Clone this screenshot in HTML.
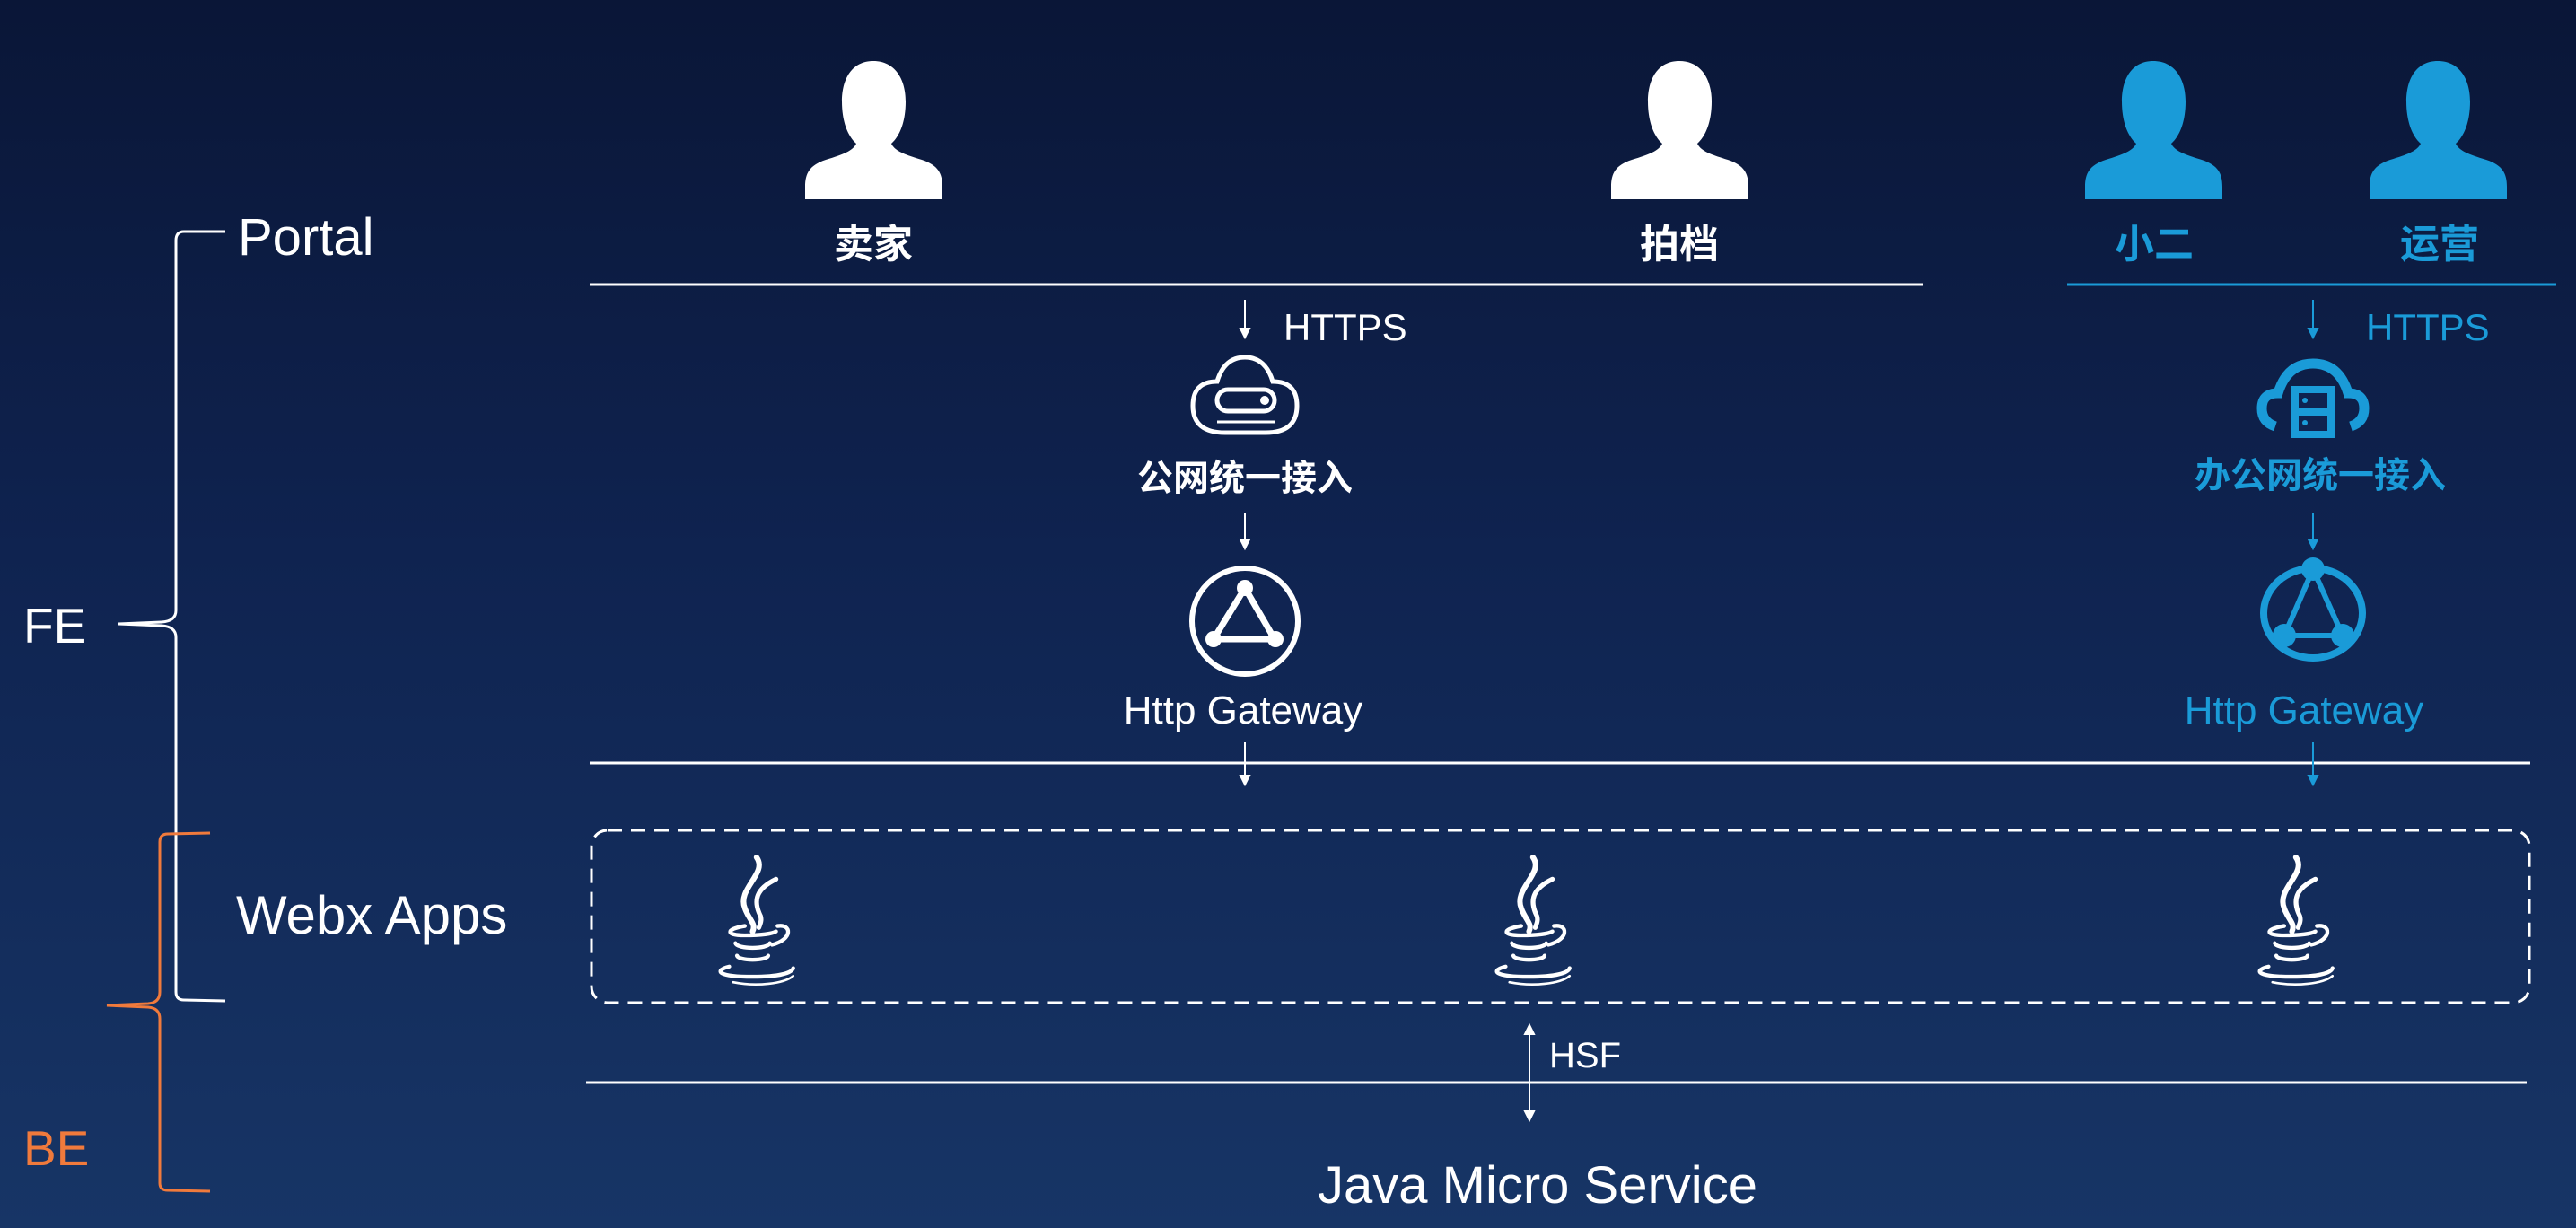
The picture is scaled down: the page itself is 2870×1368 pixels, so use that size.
<!DOCTYPE html>
<html><head><meta charset="utf-8">
<style>
html,body{margin:0;padding:0}
body{width:2870px;height:1368px;overflow:hidden;position:relative;background:linear-gradient(180deg,#0a1637 0%,#0f2350 45%,#173566 100%);font-family:"Liberation Sans","Noto Sans CJK SC",sans-serif;color:#fff}
.t{position:absolute;white-space:nowrap;line-height:1}
.c{transform:translateX(-50%)}
.b{color:#1a9bd8}
.cj{font-weight:bold}
svg{position:absolute;left:0;top:0}
</style></head><body>
<svg width="2870" height="1368" viewBox="0 0 2870 1368">
<defs>
<path id="person" d="M76,0 C100,0 112,20 112,45 C112,70 104,85 96,92 C100,100 110,104 130,110 C148,116 153,125 153,140 L153,154 L0,154 L0,140 C0,125 5,116 23,110 C43,104 53,100 57,92 C49,85 41,70 41,45 C41,20 52,0 76,0Z"/>
<g id="java" fill="none" stroke="#fff" stroke-linecap="round">
<path d="M55,0 C70,20 30,40 40,65 C45,80 55,85 50,95" stroke-width="7"/>
<path d="M80,28 C55,40 50,55 60,75 C62,80 60,85 58,90" stroke-width="6"/>
<path d="M40,88 C15,92 15,100 40,100 C60,100 75,98 80,95" stroke-width="5"/>
<path d="M82,88 C100,85 102,105 75,112" stroke-width="5"/>
<path d="M28,110 C30,118 70,118 72,110" stroke-width="5"/>
<path d="M30,126 C32,133 68,133 70,126" stroke-width="5"/>
<path d="M20,140 C0,145 5,153 50,153 C85,153 100,148 102,142" stroke-width="5"/>
<path d="M25,160 C55,166 90,162 102,152" stroke-width="3"/>
</g>
</defs>
<path d="M251,258 L205,258 Q196,258 196,268 L196,680 Q196,692 180,693 L132,695 L180,697 Q196,698 196,710 L196,1105 Q196,1114 205,1114 L251,1115" fill="none" stroke="#fff" stroke-width="3"/>
<path d="M234,928 L187,929 Q178,929 178,938 L178,1105 Q178,1117 165,1118 L119,1120 L165,1122 Q178,1123 178,1135 L178,1318 Q178,1326 187,1326 L234,1327" fill="none" stroke="#f07a3c" stroke-width="3"/>
<use href="#person" x="897" y="68" fill="#fff"/>
<use href="#person" x="1795" y="68" fill="#fff"/>
<use href="#person" x="2323" y="68" fill="#1a9bd8"/>
<use href="#person" x="2640" y="68" fill="#1a9bd8"/>
<line x1="657" y1="317" x2="2143" y2="317" stroke="#fff" stroke-width="3"/>
<line x1="2303" y1="317" x2="2848" y2="317" stroke="#1a9bd8" stroke-width="3"/>
<line x1="657" y1="850" x2="2819" y2="850" stroke="#fff" stroke-width="3"/>
<line x1="653" y1="1206" x2="2815" y2="1206" stroke="#fff" stroke-width="3"/>
<g stroke="#fff" stroke-width="2" fill="#fff">
<line x1="1387" y1="334" x2="1387" y2="368"/><path d="M1382,366 L1392,366 L1387,376Z"/>
<line x1="1387" y1="571" x2="1387" y2="603"/><path d="M1382,601 L1392,601 L1387,611Z"/>
<line x1="1387" y1="827" x2="1387" y2="866"/><path d="M1382,864 L1392,864 L1387,874Z"/>
<line x1="1704" y1="1150" x2="1704" y2="1240"/><path d="M1699,1152 L1709,1152 L1704,1142Z"/><path d="M1699,1238 L1709,1238 L1704,1248Z"/>
</g>
<g stroke="#1a9bd8" stroke-width="2" fill="#1a9bd8">
<line x1="2577" y1="334" x2="2577" y2="368"/><path d="M2572,366 L2582,366 L2577,376Z"/>
<line x1="2577" y1="571" x2="2577" y2="603"/><path d="M2572,601 L2582,601 L2577,611Z"/>
<line x1="2577" y1="827" x2="2577" y2="866"/><path d="M2572,864 L2582,864 L2577,874Z"/>
</g>
<g fill="none" stroke="#fff" stroke-width="5">
<path d="M1365,482 L1410,482 Q1445,482 1445,452 Q1445,425 1418,425 Q1410,398 1387,398 Q1364,398 1356,425 Q1329,425 1329,452 Q1329,482 1365,482Z"/>
<rect x="1356" y="434" width="64" height="24" rx="12"/>
<line x1="1356" y1="470" x2="1420" y2="470" stroke-width="3"/>
</g>
<circle cx="1409" cy="446" r="5" fill="#fff"/>
<circle cx="1387" cy="692" r="59" fill="none" stroke="#fff" stroke-width="6"/>
<path d="M1387,655 L1352,712 L1420,712Z" fill="none" stroke="#fff" stroke-width="7"/>
<circle cx="1387" cy="655" r="9" fill="#fff"/><circle cx="1352" cy="712" r="9" fill="#fff"/><circle cx="1421" cy="712" r="9" fill="#fff"/>
<g fill="none" stroke="#1a9bd8" stroke-width="11">
<path d="M2535,475 Q2520,470 2520,455 Q2520,438 2538,438 Q2548,405 2577,405 Q2606,405 2616,438 Q2634,438 2634,455 Q2634,470 2619,475"/>
</g>
<rect x="2553" y="430" width="48" height="58" fill="#1a9bd8"/>
<rect x="2561" y="438" width="32" height="17" fill="#0f2350"/><rect x="2561" y="463" width="32" height="17" fill="#0f2350"/>
<circle cx="2568" cy="446" r="3" fill="#1a9bd8"/><circle cx="2568" cy="471" r="3" fill="#1a9bd8"/>
<ellipse cx="2577" cy="683" rx="55" ry="50" fill="none" stroke="#1a9bd8" stroke-width="8"/>
<path d="M2577,634 L2545,708 L2610,708Z" fill="none" stroke="#1a9bd8" stroke-width="6"/>
<circle cx="2577" cy="634" r="13" fill="#1a9bd8"/><circle cx="2545" cy="708" r="13" fill="#1a9bd8"/><circle cx="2610" cy="708" r="13" fill="#1a9bd8"/>
<rect x="659" y="925" width="2159" height="192" rx="18" fill="none" stroke="#fff" stroke-width="3" stroke-dasharray="16,10"/>
<use href="#java" transform="translate(795,955) scale(0.87)"/>
<use href="#java" transform="translate(1660,955) scale(0.87)"/>
<use href="#java" transform="translate(2510,955) scale(0.87)"/>
</svg>
<div class="t" style="left:265px;top:236px;font-size:58px">Portal</div>
<div class="t" style="left:26px;top:670px;font-size:55px">FE</div>
<div class="t" style="left:26px;top:1252px;font-size:55px;color:#f07a3c">BE</div>
<div class="t" style="left:263px;top:990px;font-size:60px">Webx Apps</div>
<div class="t c cj" style="left:973px;top:251px;font-size:44px">卖家</div>
<div class="t c cj" style="left:1871px;top:251px;font-size:44px">拍档</div>
<div class="t c cj b" style="left:2400px;top:251px;font-size:44px">小二</div>
<div class="t c cj b" style="left:2718px;top:251px;font-size:44px">运营</div>
<div class="t" style="left:1430px;top:344px;font-size:42px">HTTPS</div>
<div class="t b" style="left:2636px;top:344px;font-size:42px">HTTPS</div>
<div class="t c cj" style="left:1387px;top:513px;font-size:40px">公网统一接入</div>
<div class="t c cj b" style="left:2585px;top:510px;font-size:40px">办公网统一接入</div>
<div class="t c" style="left:1385px;top:770px;font-size:44px">Http Gateway</div>
<div class="t c b" style="left:2567px;top:770px;font-size:44px">Http Gateway</div>
<div class="t" style="left:1726px;top:1156px;font-size:40px">HSF</div>
<div class="t c" style="left:1713px;top:1292px;font-size:58px">Java Micro Service</div>
</body></html>
